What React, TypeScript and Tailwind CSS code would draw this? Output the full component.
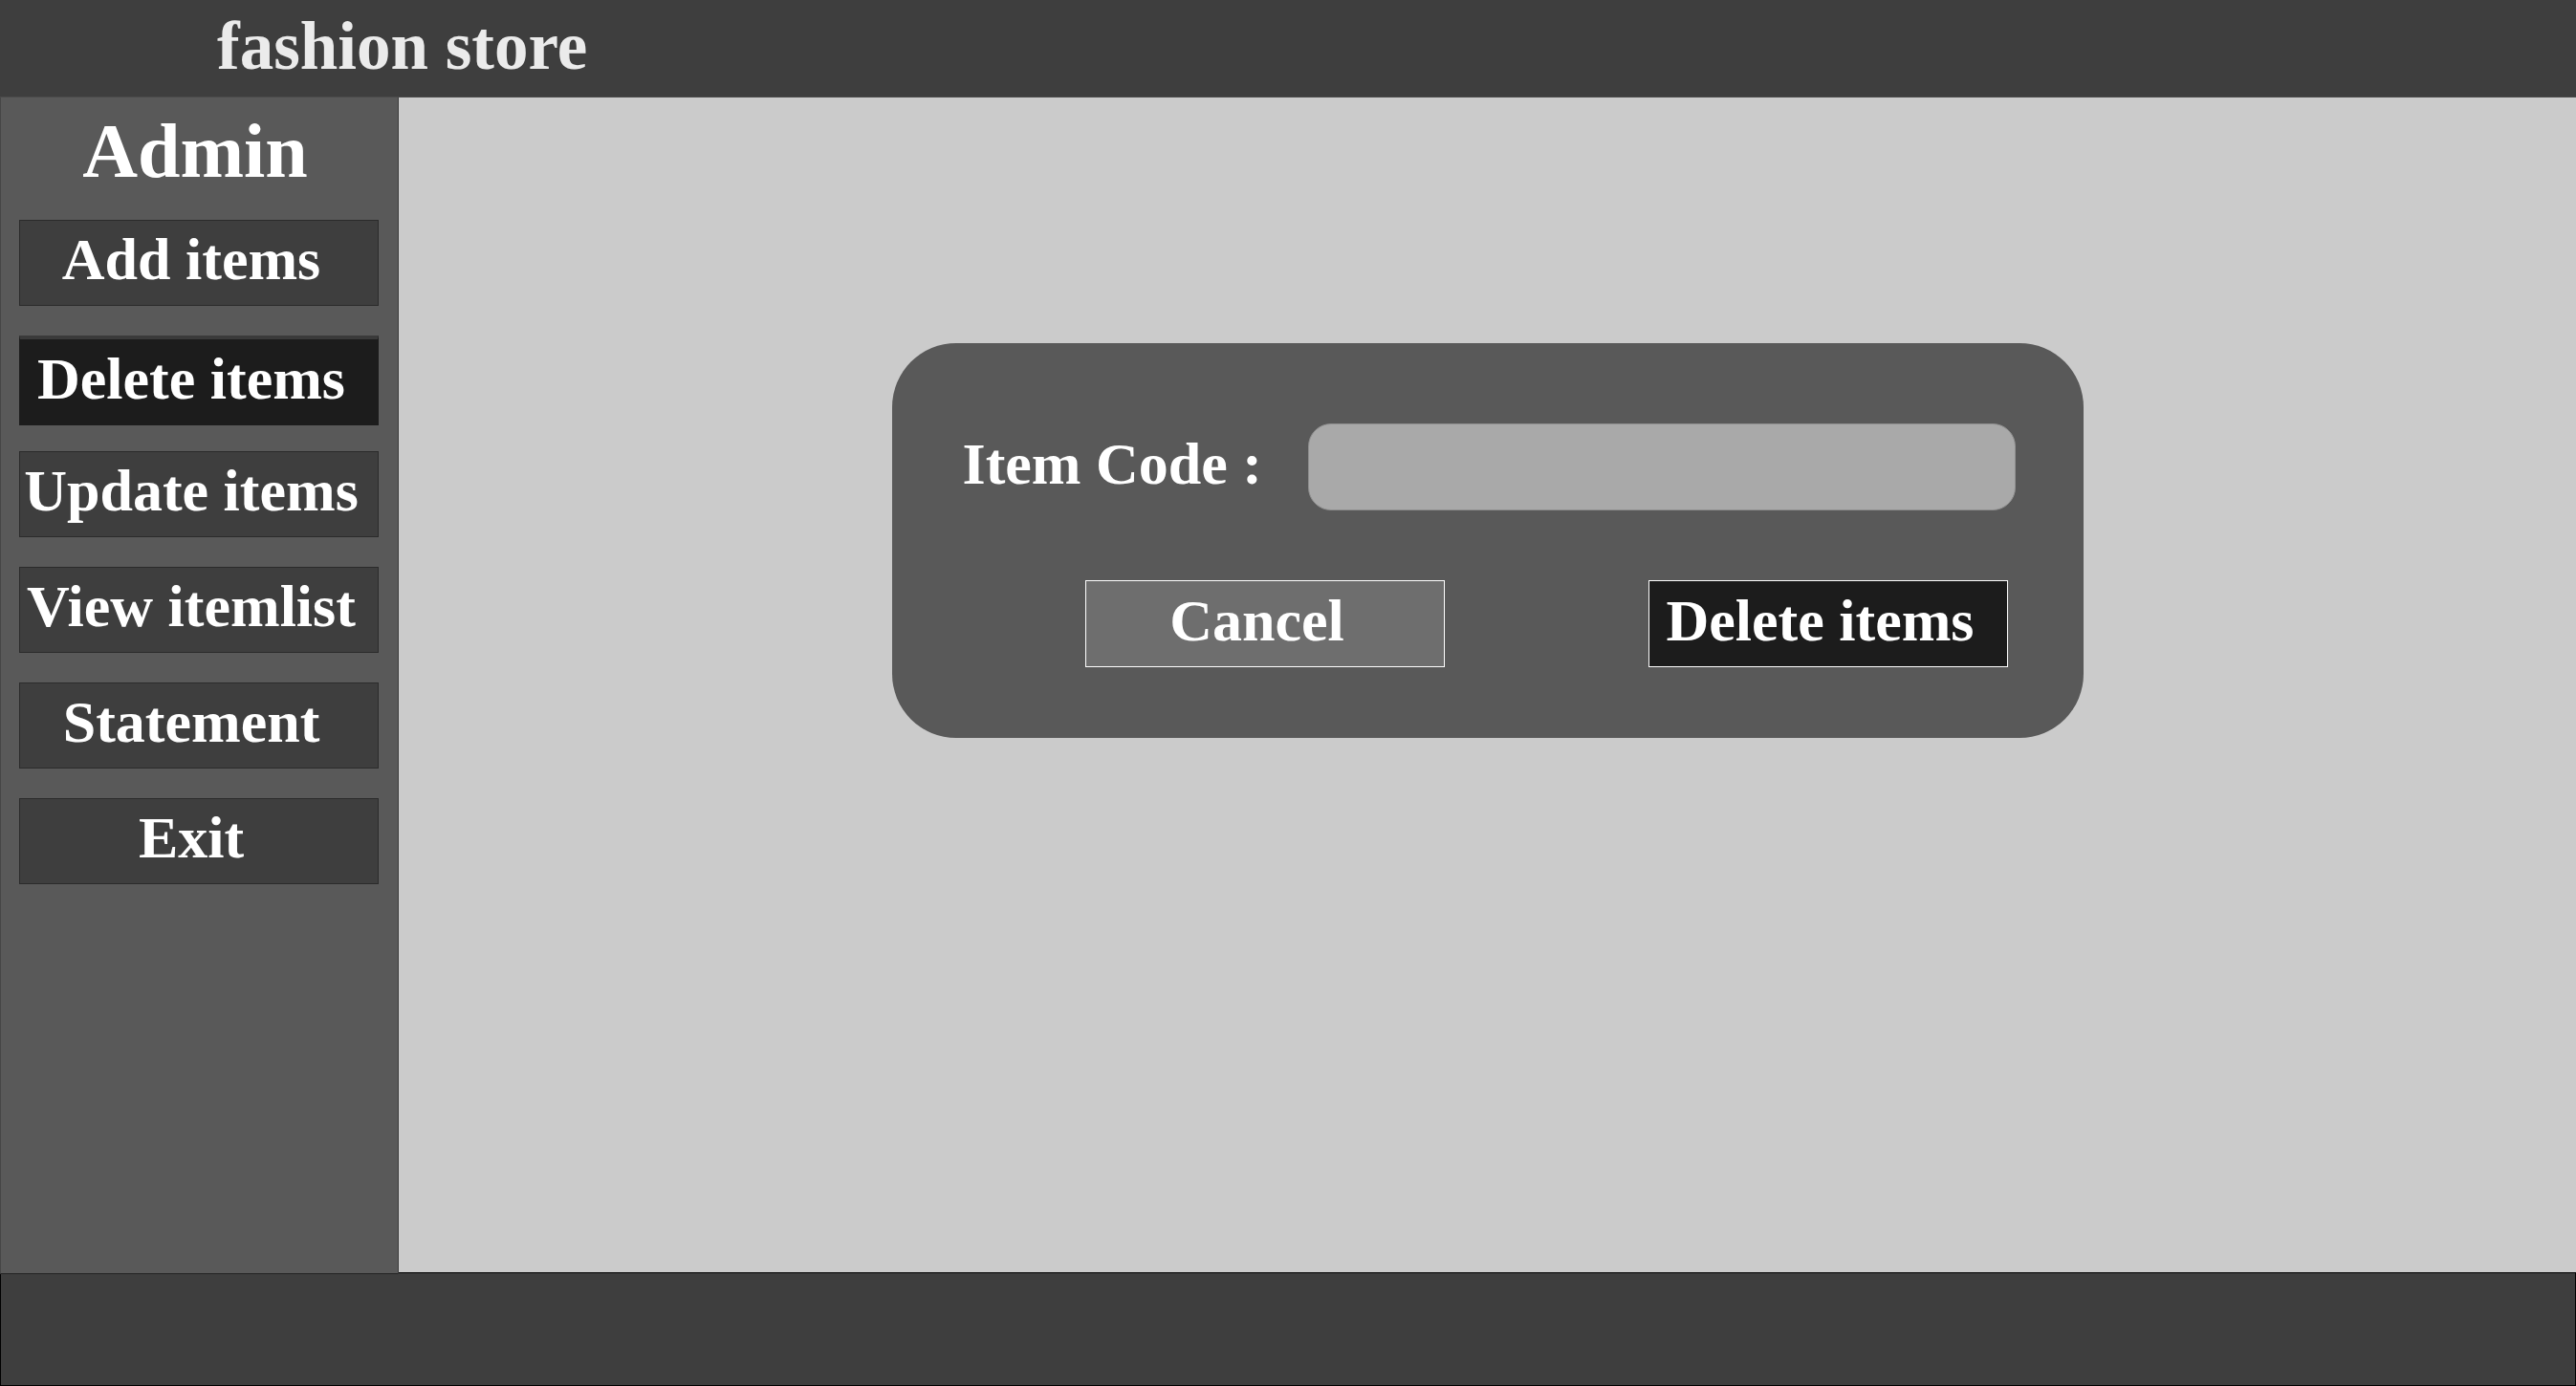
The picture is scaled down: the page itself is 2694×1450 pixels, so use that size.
import { useState } from "react";

const menu = [
  "Add items",
  "Delete items",
  "Update items",
  "View itemlist",
  "Statement",
  "Exit",
];

const menuButton =
  "flex w-full items-center justify-center whitespace-nowrap border pr-4 pb-2 text-[62px] leading-none font-bold text-white";

const actionButton =
  "flex h-[91px] w-[376px] items-center justify-center whitespace-nowrap border border-white pr-4 pb-2 text-[62px] leading-none font-bold text-white";

function MenuItem({ label, active }: { label: string; active: boolean }) {
  return (
    <li className="h-[90px]">
      <button
        type="button"
        aria-current={active ? "page" : undefined}
        className={
          active
            ? `${menuButton} h-[94px] border-t-4 border-[#1c1c1c] border-t-[#3a3a3a] bg-[#1c1c1c]`
            : `${menuButton} h-[90px] border-[#2b2b2b] bg-[#3e3e3e]`
        }
      >
        {label}
      </button>
    </li>
  );
}

export default function App() {
  const [code, setCode] = useState("");

  return (
    <div className="flex min-h-screen flex-col bg-[#cbcbcb] font-['Liberation_Serif',serif]">
      <header className="flex h-[102px] items-center border-b border-[#4a4a4a] bg-[#3e3e3e] pb-1 pl-[227px]">
        <h1 className="text-[71px] leading-none font-bold text-[#ebebeb]">fashion store</h1>
      </header>

      <div className="flex flex-1">
        <aside className="relative -mb-0.5 w-[417px] shrink-0 border border-t-0 border-[#3a3a3a] border-b-[#222222] border-l-[#464646] bg-[#595959] pt-4 pr-5 pl-[19px]">
          <h2 className="mb-8 pr-2 text-center text-[80px] leading-none font-bold text-white">Admin</h2>
          <nav aria-label="Admin">
            <ul className="flex flex-col gap-[31px]">
              {menu.map((label) => (
                <MenuItem key={label} label={label} active={label === "Delete items"} />
              ))}
            </ul>
          </nav>
        </aside>

        <main className="flex flex-1 items-start justify-center pt-[257px]">
          <form
            onSubmit={(event) => event.preventDefault()}
            className="w-[1246px] max-w-full rounded-[67px] bg-[#595959] pt-[84px] pr-[71px] pb-[74px] pl-[74px]"
          >
            <div className="flex items-center gap-12">
              <label
                htmlFor="item-code"
                className="pb-2 text-[62px] leading-none font-bold whitespace-nowrap text-white"
              >
                Item Code :
              </label>
              <input
                id="item-code"
                type="text"
                value={code}
                onChange={(event) => setCode(event.target.value)}
                className="h-[91px] min-w-0 flex-1 rounded-3xl border border-[#8f8f8f] bg-[#a9a9a9] px-6 text-[48px] text-white outline-none"
              />
            </div>
            <div className="mt-[73px] flex justify-end gap-[213px] pr-2">
              <button type="button" onClick={() => setCode("")} className={`${actionButton} bg-[#6e6e6e]`}>
                Cancel
              </button>
              <button type="submit" className={`${actionButton} bg-[#1c1c1c]`}>
                Delete items
              </button>
            </div>
          </form>
        </main>
      </div>

      <footer className="h-[119px] border border-black bg-[#3e3e3e]" />
    </div>
  );
}
